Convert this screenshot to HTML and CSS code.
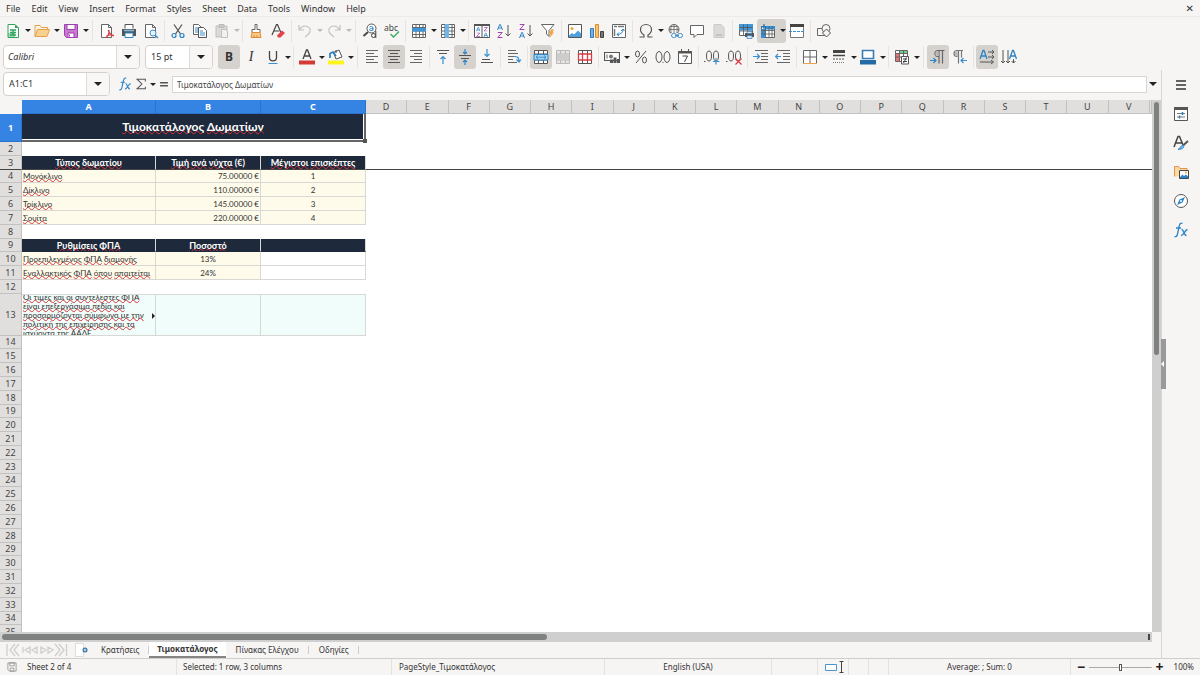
FILE: index.html
```html
<!DOCTYPE html>
<html lang="el">
<head>
<meta charset="utf-8">
<title>Τιμοκατάλογος</title>
<link rel="stylesheet" href="styles.css">
</head>
<body>
<svg class="defs" aria-hidden="true">
  <symbol id="i-new" viewBox="0 0 16 16"><path d="M3 1.500h7l3.500 3.500v9.500H3z" fill="#fff" stroke="#2fa45a"/><path d="M10 1.500v3.500h3.500z" fill="#2fa45a"/><path d="M5 7h6M5 9.500h6M5 12h6M8 7v5" stroke="#2fa45a" stroke-width="1.300"/><path d="M3 10h7v4H3z" fill="#2fa45a" opacity=".45"/></symbol>
  <symbol id="i-open" viewBox="0 0 16 16"><path d="M1 13.500V2.500h5l1.500 2h6V7" fill="#fdf3e0" stroke="#e3a04a"/><path d="M1 13.500L3.500 6.500h12l-2.500 7z" fill="#f9d090" stroke="#e3a04a"/></symbol>
  <symbol id="i-save" viewBox="0 0 16 16"><path d="M1.500 1.500h13v13h-11l-2-2z" fill="#c77bd0" stroke="#a03fae"/><path d="M4 1.500h8v5H4zM5 10h6v4.500H5z" fill="#fff" stroke="#a03fae"/><path d="M6.500 11.500v2" stroke="#a03fae"/></symbol>
  <symbol id="i-pdf" viewBox="0 0 16 16"><path d="M2.500 1.500h7l3 3v10h-10z" fill="#fff" stroke="#666"/><path d="M9.500 1.500v3h3" fill="none" stroke="#666"/><path d="M9 7c1.500 3 3 5.500 5.500 6M7 14.500c2.500-2 3.500-4 3-7.500M7.500 13c2-1 5-1.500 7.500-.5" fill="none" stroke="#dc3b45" stroke-width="1.200"/></symbol>
  <symbol id="i-print" viewBox="0 0 16 16"><path d="M4 5.500v-4h8v4" fill="#fff" stroke="#555"/><path d="M1 6h14v7H1z" fill="#555"/><path d="M3 7.500h10" stroke="#7cc0ef" stroke-width="1.500"/><path d="M4 10h8v4.500H4z" fill="#fff" stroke="#2a84c5"/></symbol>
  <symbol id="i-preview" viewBox="0 0 16 16"><path d="M2.500 1.500h7l3 3v10h-10z" fill="#fff" stroke="#666"/><path d="M9.500 1.500v3h3" fill="none" stroke="#666"/><circle cx="10" cy="10" r="3" fill="#e8f4fd" stroke="#3a8fd0"/><path d="M12 12l3 3" stroke="#3a8fd0" stroke-width="1.500"/></symbol>
  <symbol id="i-cut" viewBox="0 0 16 16"><path d="M4 1.500l6.500 9.500M12 1.500L5.500 11" stroke="#555" stroke-width="1.300"/><circle cx="4" cy="12.500" r="2" fill="none" stroke="#2a84c5" stroke-width="1.200"/><circle cx="12" cy="12.500" r="2" fill="none" stroke="#2a84c5" stroke-width="1.200"/></symbol>
  <symbol id="i-copy" viewBox="0 0 16 16"><path d="M1.500 1.500h5l2.500 2.500v7.500H1.500z" fill="#fff" stroke="#666"/><path d="M3 5h4M3 7h3M3 9h3" stroke="#3a8fd0"/><path d="M6.500 4.500h5l3 3v7h-8z" fill="#fff" stroke="#555"/><path d="M8 8h3M8 10h5M8 12h5" stroke="#3a8fd0"/></symbol>
  <symbol id="i-paste" viewBox="0 0 16 16"><path d="M2 3h11v11H2z" fill="#dcdad8" stroke="#c1bfbd"/><path d="M5 1.500h5v3H5z" fill="#cbc9c7" stroke="#bbb"/><path d="M7.500 6.500h4l2 2v6h-6z" fill="#f2f1f0" stroke="#c1bfbd"/></symbol>
  <symbol id="i-brush" viewBox="0 0 16 16"><path d="M7 1.500h2v5h3v3H4v-3h3z" fill="#fff" stroke="#666"/><path d="M4 9.500h8l1 5H3z" fill="#f8c98d" stroke="#df8c2f"/><path d="M6 12v2M9 12v2" stroke="#df8c2f"/></symbol>
  <symbol id="i-clear" viewBox="0 0 16 16"><path d="M2 12L6.500 1.500h1L11 10M4 8h5" fill="none" stroke="#444" stroke-width="1.200"/><path d="M7 12.500l5-5 3 2.500-4.500 4.500H8z" fill="#e4414b"/></symbol>
  <symbol id="i-undo" viewBox="0 0 16 16"><path d="M2 2v5h5M2.500 6.500C5 3 8 2.500 10.500 3.500 14 5 14 9 11 11.500L8 14" fill="none" stroke="#c4c2c0" stroke-width="1.200"/></symbol>
  <symbol id="i-redo" viewBox="0 0 16 16"><path d="M14 2v5H9M13.500 6.500C11 3 8 2.500 5.500 3.500 2 5 2 9 5 11.500L8 14" fill="none" stroke="#c4c2c0" stroke-width="1.200"/></symbol>
  <symbol id="i-find" viewBox="0 0 16 16"><circle cx="9.500" cy="5.500" r="4.500" fill="#fff" stroke="#555"/><path d="M6 9L1.500 13" stroke="#444" stroke-width="1.800"/><path d="M7.500 4c1.500-1 3.500-.5 3.500 1v2.500M11 5.500c-2 0-3.500.3-3.500 1.300 0 1.200 2.500 1.200 3.500-.3" fill="none" stroke="#2a84c5"/><circle cx="11.500" cy="12.500" r="2" fill="#f6f5f4" stroke="#444"/><path d="M13.800 8v7" stroke="#444"/></symbol>
  <symbol id="i-spell" viewBox="0 0 16 16"><text x="0" y="7.500" font-size="8.500" fill="#444">abc</text><path d="M6.500 11l3 3L15 8.500" fill="none" stroke="#35a860" stroke-width="1.300"/></symbol>
  <symbol id="i-row" viewBox="0 0 16 16"><path d="M1.500 1.500h13v13h-13zM1.500 4.500h13M1.500 8h13M1.500 11.500h13M5 1.500v13M8.500 1.500v13M12 1.500v13" fill="#fff" stroke="#666"/><path d="M1 5h14v3.500H1z" fill="#3f96d8"/></symbol>
  <symbol id="i-col" viewBox="0 0 16 16"><path d="M1.500 1.500h13v13h-13zM1.500 4.500h13M1.500 8h13M1.500 11.500h13M5 1.500v13M8.500 1.500v13M12 1.500v13" fill="#fff" stroke="#666"/><path d="M5 1h4v14H5z" fill="#6db5ea"/></symbol>
  <symbol id="i-a" viewBox="0 0 6 6"><path d="M.5 6L2.700.5h.6L5.500 6M1.300 4h3.400" fill="none" stroke="#2a84c5"/></symbol>
  <symbol id="i-z" viewBox="0 0 6 6"><path d="M.8.500h4.400L.8 5.500h4.600" fill="none" stroke="#a33fae"/></symbol>
  <symbol id="i-sort" viewBox="0 0 16 16"><path d="M.5 1.500h15v13H.5zM8 1.500v13" fill="#fff" stroke="#555"/><path d="M0 2h16" stroke="#555" stroke-width="2"/><use href="#i-a" x="2" y="4" width="4.500" height="4.500"/><use href="#i-z" x="2" y="9.500" width="4.500" height="4.500"/><use href="#i-z" x="9.500" y="4" width="4.500" height="4.500"/><use href="#i-a" x="9.500" y="9.500" width="4.500" height="4.500"/></symbol>
  <symbol id="i-asc" viewBox="0 0 16 16"><use href="#i-a" x="1" y="1" width="6" height="6"/><use href="#i-z" x="1" y="9" width="6" height="6"/><path d="M12 2v11M9.500 10.500L12 13l2.500-2.500" fill="none" stroke="#555"/></symbol>
  <symbol id="i-desc" viewBox="0 0 16 16"><use href="#i-z" x="1" y="1" width="6" height="6"/><use href="#i-a" x="1" y="9" width="6" height="6"/><path d="M12 2v11M9.500 10.500L12 13l2.500-2.500" fill="none" stroke="#555"/></symbol>
  <symbol id="i-filter" viewBox="0 0 16 16"><path d="M1.500 1.500h12.500L9 7.500v6L6.500 11V7.500z" fill="#fff" stroke="#666"/><path d="M11 6.500h3L12.500 9.500H14L9.500 15l1-4H9z" fill="#f1a640"/></symbol>
  <symbol id="i-image" viewBox="0 0 16 16"><path d="M1.500 1.500h13v13h-13z" fill="#fff" stroke="#555"/><circle cx="5" cy="5.500" r="1.500" fill="#f2a33c"/><path d="M2 12.500L5 10l2 1.500L11 7.500l3 3V14H2z" fill="#4e9fdc"/></symbol>
  <symbol id="i-chart" viewBox="0 0 16 16"><path d="M1.500 5.500h3v9h-3z" fill="#6db5ea" stroke="#2a7fc0"/><path d="M6.500 1.500h3v13h-3z" fill="#f8c273" stroke="#df8c2f"/><path d="M11.500 8.500h3v6h-3z" fill="#777" stroke="#444"/></symbol>
  <symbol id="i-pivot" viewBox="0 0 16 16"><path d="M1.500 1.500h13v13h-13z" fill="#fff" stroke="#666"/><path d="M3 3.500h3M7 3.500h6M3.500 6v7" stroke="#777" stroke-width="1.500"/><path d="M6 11.500c4 0 6-2 6-5M10 8l2-2 1.500 2M8 9.500l-2 2L8 13" fill="none" stroke="#2a84c5"/></symbol>
  <symbol id="i-omega" viewBox="0 0 16 16"><path d="M1.500 14h4.500v-2C3.500 10.500 2.500 9 2.500 6.500 2.500 3.500 5 1.500 8 1.500s5.500 2 5.500 5c0 2.500-1 4-3.500 5.500v2h4.500" fill="none" stroke="#555" stroke-width="1.200"/></symbol>
  <symbol id="i-link" viewBox="0 0 16 16"><circle cx="7" cy="6.500" r="5" fill="none" stroke="#666"/><path d="M2 6.500h10M7 1.500v10M3 3.500h8M4.500 2.500c-1 3-1 5 0 8M9.500 2.500c1 3 1 5 0 8" fill="none" stroke="#666" stroke-width=".8"/><path d="M4 10h12v5H4z" fill="#f6f5f4"/><rect x="4.500" y="10.500" width="5" height="4" rx="2" fill="none" stroke="#3a8fd0"/><rect x="10.500" y="10.500" width="5" height="4" rx="2" fill="none" stroke="#3a8fd0"/><path d="M8 12.500h4" stroke="#3a8fd0"/></symbol>
  <symbol id="i-comment" viewBox="0 0 16 16"><path d="M1.500 2.500h13v9H8L5 14.500v-3H1.500z" fill="#fff" stroke="#666"/></symbol>
  <symbol id="i-header" viewBox="0 0 16 16"><path d="M3 1.500h7l3 3v10H3z" fill="#dcdad8" stroke="#cbc9c7"/><path d="M5 11h6v2H5z" fill="#c4c2c0"/></symbol>
  <symbol id="i-range" viewBox="0 0 16 16"><path d="M1.500 1.500h13v11h-13z" fill="#fff" stroke="#666"/><path d="M1 1h14v6.500H1z" fill="#3f96d8"/><path d="M1.500 4.500h13M1.500 8h13M5.500 1.500v11M9.500 1.500v11" stroke="#555" stroke-width=".8"/><path d="M7 10h9v4H7z" fill="#555"/><path d="M9 8.500h5v2H9zM9 12.500h5v3H9z" fill="#cfe6f8" stroke="#2a6fa8" stroke-width=".6"/></symbol>
  <symbol id="i-freeze" viewBox="0 0 16 16"><path d="M1.500 3.500h13v11h-13z" fill="#fff" stroke="#666"/><path d="M1 6h4.500v9H1zM5 3h10v3.500H5z" fill="#3490d6"/><path d="M1.500 7.500h13M1.500 11h13M5.500 3.500v11M9 3.500v11M12 3.500v11" stroke="#555" stroke-width=".8"/><path d="M1 4h5M4 1v5" stroke="#1c6fb2" stroke-width="1.200"/></symbol>
  <symbol id="i-split" viewBox="0 0 16 16"><path d="M1.500 1.500h13v13h-13z" fill="#fff" stroke="#777"/><path d="M1 2.500h14" stroke="#444" stroke-width="3"/><path d="M0 8.500h16" stroke="#3a8fd0" stroke-dasharray="3 1"/></symbol>
  <symbol id="i-shapes" viewBox="0 0 16 16"><path d="M1.500 5.500h7v7h-7z" fill="none" stroke="#666"/><circle cx="10" cy="5.500" r="4" fill="#f6f5f4" stroke="#666"/><path d="M10.500 6l4 4-4 4-4-4z" fill="#f6f5f4" stroke="#555"/></symbol>
  <symbol id="i-under" viewBox="0 0 16 16"><path d="M4.500 2v6.500c0 4.500 7 4.500 7 0V2" fill="none" stroke="#444" stroke-width="1.300"/><path d="M3.500 14.500h9" stroke="#3a8fd0"/></symbol>
  <symbol id="i-fcolor" viewBox="0 0 16 16"><path d="M4 10L7.500 1h1L12 10M5.500 7h5" fill="none" stroke="#444" stroke-width="1.300"/><path d="M0 11.500h16v4H0z" fill="#d63a36"/></symbol>
  <symbol id="i-bcolor" viewBox="0 0 16 16"><path d="M5.500 3.500L11 1l3 7-6 2z" fill="#fff" stroke="#555"/><path d="M2 9V4.500l3-1.500L8 7" fill="none" stroke="#2a7fc0" stroke-width="1.700"/><path d="M8 1v3" stroke="#444"/><path d="M0 11.500h16v4H0z" fill="#fcf41c"/></symbol>
  <symbol id="i-left" viewBox="0 0 16 16"><path d="M2 1.500h12M2 4.500h8M2 7.500h12M2 10.500h8M2 13.500h12" stroke="#666"/></symbol>
  <symbol id="i-center" viewBox="0 0 16 16"><path d="M2 1.500h12M4 4.500h8M2 7.500h12M4 10.500h8M2 13.500h12" stroke="#555"/></symbol>
  <symbol id="i-right" viewBox="0 0 16 16"><path d="M2 1.500h12M6 4.500h8M2 7.500h12M6 10.500h8M2 13.500h12" stroke="#666"/></symbol>
  <symbol id="i-top" viewBox="0 0 16 16"><path d="M2 1.500h12M4 4.500h8" stroke="#555"/><path d="M8 15V7.500M5.500 10L8 7.500l2.500 2.500" fill="none" stroke="#3a8fd0" stroke-width="1.200"/></symbol>
  <symbol id="i-middle" viewBox="0 0 16 16"><path d="M2 6.500h12M4 9.500h8" stroke="#555"/><path d="M8 0v5M6 3l2 2 2-2M8 16v-5M6 13l2-2 2 2" fill="none" stroke="#2a84c5" stroke-width="1.200"/></symbol>
  <symbol id="i-bottom" viewBox="0 0 16 16"><path d="M3 10.500h8M2 13.500h12" stroke="#555"/><path d="M8 0v7.500M5.500 5L8 7.500 10.500 5" fill="none" stroke="#3a8fd0" stroke-width="1.200"/></symbol>
  <symbol id="i-wrap" viewBox="0 0 16 16"><path d="M2 1.500h8M2 4.500h10M2 7.500h6M2 10.500h5M2 13.500h9" stroke="#666"/><path d="M8 7.500c4 0 5 1 5 5M10.500 10.500L13 13l2-2.500" fill="none" stroke="#3a8fd0" stroke-width="1.200"/></symbol>
  <symbol id="i-merge" viewBox="0 0 16 16"><path d="M1.500 1.500h13v13h-13zM1.500 5h13M1.500 11h13M5.500 1.500V5M10.500 1.500V5M5.500 11v3.500M10.500 11v3.500" fill="#fff" stroke="#555"/><path d="M1 5.500h14v5.500H1z" fill="#a9d3f3" stroke="#2a84c5"/><path d="M3 8.200h10M5 6.500L3 8.200 5 10M11 6.500l2 1.700-2 1.800" fill="none" stroke="#2a84c5" stroke-width=".8"/></symbol>
  <symbol id="i-mergeoff" viewBox="0 0 16 16"><path d="M1.500 1.500h13v13h-13zM1.500 5h13M1.500 11h13M5.500 1.500V5M10.500 1.500V5M5.500 11v3.500M10.500 11v3.500" fill="#e8e6e4" stroke="#bbb9b7"/><path d="M2 5.500h12v5H2z" fill="#cfcdcb"/></symbol>
  <symbol id="i-unmerge" viewBox="0 0 16 16"><path d="M1.500 1.500h13v13h-13zM5.500 1.500v13M10.500 1.500v13" fill="#fff" stroke="#555"/><path d="M1 5h14M1 11h14M5.500 5v6M10.500 5v6M1.500 5v6M14.500 5v6" stroke="#dc3b45" stroke-width="1.300"/></symbol>
  <symbol id="i-money" viewBox="0 0 16 16"><path d="M.5 3.500h15v8H.5z" fill="#fff" stroke="#555" stroke-width="1.200"/><circle cx="7" cy="7.500" r="2" fill="#777"/><path d="M6 10.500h3v3.500H6zM9.500 8.500h3V14h-3zM13 10h3v4h-3z" fill="#555"/><path d="M3 5.500v4" stroke="#666"/></symbol>
  <symbol id="i-percent" viewBox="0 0 16 16"><path d="M13 2L3 14" stroke="#555"/><ellipse cx="4.500" cy="5" rx="2" ry="3" fill="none" stroke="#555"/><ellipse cx="11.500" cy="11" rx="2" ry="3" fill="none" stroke="#555"/></symbol>
  <symbol id="i-number" viewBox="0 0 16 16"><ellipse cx="4" cy="8" rx="3" ry="5.500" fill="none" stroke="#555"/><ellipse cx="12" cy="8" rx="3" ry="5.500" fill="none" stroke="#555"/><path d="M7.500 13.500h1" stroke="#555"/></symbol>
  <symbol id="i-date" viewBox="0 0 16 16"><path d="M1.500 2.500h13v12h-13z" fill="#fff" stroke="#555"/><path d="M1 3.500h14" stroke="#555" stroke-width="2"/><path d="M4.500 0v3M11.500 0v3" stroke="#555"/><path d="M5.500 7h5L7.500 13" fill="none" stroke="#444"/></symbol>
  <symbol id="i-decadd" viewBox="0 0 16 16"><ellipse cx="5" cy="7" rx="2.500" ry="5" fill="none" stroke="#555"/><ellipse cx="12" cy="7" rx="2.500" ry="5" fill="none" stroke="#555"/><path d="M0 12.500h1.500" stroke="#555"/><path d="M12 9v6.500M9 12.500h6.500" stroke="#3a8fd0" stroke-width="1.200"/></symbol>
  <symbol id="i-decdel" viewBox="0 0 16 16"><ellipse cx="5" cy="7" rx="2.500" ry="5" fill="none" stroke="#555"/><ellipse cx="12" cy="7" rx="2.500" ry="5" fill="none" stroke="#555"/><path d="M0 12.500h1.500" stroke="#555"/><path d="M9.500 9.500l6 6M15.500 9.500l-6 6" stroke="#dc3b45" stroke-width="1.200"/></symbol>
  <symbol id="i-indent" viewBox="0 0 16 16"><path d="M2 1.500h13M8 4.500h7M8 7.500h7M8 10.500h7M2 13.500h13" stroke="#666"/><path d="M0 7.500h6M4 5l2.500 2.500L4 10" fill="none" stroke="#3a8fd0" stroke-width="1.200"/></symbol>
  <symbol id="i-outdent" viewBox="0 0 16 16"><path d="M2 1.500h13M8 4.500h7M8 7.500h7M8 10.500h7M2 13.500h13" stroke="#666"/><path d="M0 7.500h6M3 5L.5 7.500 3 10" fill="none" stroke="#3a8fd0" stroke-width="1.200"/></symbol>
  <symbol id="i-borders" viewBox="0 0 16 16"><path d="M1.500 1.500h13v13h-13zM8 1.500v13M1.500 8h13" fill="#fff" stroke="#666"/><path d="M1 14.500h14" stroke="#eda34e"/></symbol>
  <symbol id="i-lines" viewBox="0 0 16 16"><path d="M2 2.500h12" stroke="#444" stroke-width="3"/><path d="M2 6.500h12" stroke="#444" stroke-width="1.500"/><path d="M2 10h12" stroke="#555" stroke-dasharray="2 1"/><path d="M2 13.500h12" stroke="#777" stroke-dasharray="1 1"/></symbol>
  <symbol id="i-lcolor" viewBox="0 0 16 16"><path d="M2.500 1.500h11v8h-11z" fill="#fff" stroke="#3a7db3" stroke-width="1.600"/><path d="M0 11h16v4.500H0z" fill="#256aa5"/></symbol>
  <symbol id="i-cond" viewBox="0 0 16 16"><path d="M1.500 1.500h12v11h-12z" fill="#fff" stroke="#666"/><path d="M5 2h8v2.500H5z" fill="#77cf8c"/><path d="M2 5h3.500v7H2z" fill="#e77474"/><path d="M1.500 4.500h12M1.500 8h12M5.500 1.500v11M9.500 1.500v11" stroke="#666"/><path d="M7.500 7.500h7v7.500h-7z" fill="#fff" stroke="#555"/><path d="M9 10h4M9 12.500h4M12.500 8.500l-3 5.500" stroke="#444"/></symbol>
  <symbol id="i-ltr" viewBox="0 0 16 16"><path d="M14.500 1.500H8c-4 0-4 6 0 6h.5M9 1.500v13M12.500 1.500v13" fill="none" stroke="#666" stroke-width="1.200"/><path d="M5.500 2.500h3v4.500h-3z" fill="#bbb"/><path d="M0 11.500h5.500M3.500 9L6 11.500 3.500 14" fill="none" stroke="#2a84c5" stroke-width="1.200"/></symbol>
  <symbol id="i-rtl" viewBox="0 0 16 16"><path d="M11 1.500H5c-4 0-4 6 0 6h.5M6.500 1.500v13M9.500 1.500v7" fill="none" stroke="#777" stroke-width="1.200"/><path d="M3 2.500h3v4.500H3z" fill="#bbb"/><path d="M9 11.500h6M11.500 9L9 11.500l2.500 2.500" fill="none" stroke="#3a8fd0" stroke-width="1.200"/></symbol>
  <symbol id="i-horiz" viewBox="0 0 16 16"><path d="M1 10L4 1.500h1L8 10M2.500 7h4" fill="none" stroke="#2a84c5" stroke-width="1.300"/><path d="M9 3h6M9 8h6M1 13h13M13 1l2 2-2 2M13 6l2 2-2 2M12 11l2.500 2-2.500 2" fill="none" stroke="#555"/></symbol>
  <symbol id="i-vert" viewBox="0 0 16 16"><path d="M8.500 10L11.500 1.500h1L15.500 10M10 7h4" fill="none" stroke="#2a84c5" stroke-width="1.300"/><path d="M2 1v13M7 1v13M12.500 10v4M0 12l2 2 2-2M5 12l2 2 2-2M10.500 12l2 2 2-2" fill="none" stroke="#555"/></symbol>
  <symbol id="i-fx" viewBox="0 0 16 16"><path d="M9.500 1.500C7.500.5 6.500 2 6 5L4.500 12c-.5 2.500-1.500 3-3 2.500M3 6h5" fill="none" stroke="#2a84c5" stroke-width="1.300"/><path d="M8.500 7.500c2.500-.5 2 6.500 5 6M14.500 7.500c-2.500 0-4 6.500-6.500 6" fill="none" stroke="#2a84c5" stroke-width="1.300"/></symbol>
  <symbol id="i-sum" viewBox="0 0 16 16"><path d="M13 5V2.500H3.500L9 8l-5.500 5.500H13V11" fill="none" stroke="#555" stroke-width="1.200"/></symbol>
  <symbol id="i-equal" viewBox="0 0 16 16"><path d="M3.500 6.500h9M3.500 10h9" stroke="#555" stroke-width="1.700"/></symbol>
  <symbol id="i-menu" viewBox="0 0 16 16"><path d="M3 4h10M3 8h10M3 12h10" stroke="#333" stroke-width="1.700"/></symbol>
  <symbol id="i-props" viewBox="0 0 16 16"><path d="M1.500 1.500h13v13h-13z" fill="#fff" stroke="#555"/><path d="M1 2.500h14" stroke="#555" stroke-width="3"/><path d="M4 7.500h8M4 11h8" stroke="#777"/><path d="M9.500 6v3M6.500 9.500v3" stroke="#2a84c5" stroke-width="1.500"/></symbol>
  <symbol id="i-styles" viewBox="0 0 16 16"><path d="M1 12L5 1.500h1.500L10 10M3 8h6" fill="none" stroke="#444" stroke-width="1.500"/><path d="M15 6l-5 4.500" stroke="#555" stroke-width="2"/><path d="M10 10c1.500 1 1.500 4-5 4.500C8 13 7 11 10 10z" fill="#7cc0ef" stroke="#2a84c5"/></symbol>
  <symbol id="i-gallery" viewBox="0 0 16 16"><path d="M1.500 12.500v-10h4l1.500 2h7v8" fill="#fbd9a5" stroke="#e3924a"/><path d="M6.500 6.500h9v8h-9z" fill="#fff" stroke="#444"/><circle cx="13" cy="8.500" r="1" fill="#f2a33c"/><path d="M7 13l2.500-2.500L11 12l2-1.500 2 2V14H7z" fill="#2a84c5"/></symbol>
  <symbol id="i-nav" viewBox="0 0 16 16"><circle cx="8" cy="8" r="6.500" fill="#fff" stroke="#555"/><path d="M12 4L9.500 9.500 4 12l2.500-5.500z" fill="#2a84c5"/><circle cx="8" cy="8" r="1" fill="#fff"/></symbol>
  <symbol id="i-tabs" viewBox="0 0 62 14"><path d="M1 1v12M9 1L4 7l5 6M13 1L8 7l5 6M17 4v6M24 4l-5 3 5 3zM31 4l-5 3 5 3zM35 4l5 3-5 3zM42 4l5 3-5 3zM49 1l5 6-5 6M53 1l5 6-5 6M60.500 1v12" fill="none" stroke="#d0cecc" stroke-width="1.300"/></symbol>
  <symbol id="i-addtab" viewBox="0 0 16 16"><path d="M1.500 1.500h8v13h-8z" fill="#fff" stroke="#ddd"/><circle cx="11" cy="8" r="2.500" fill="#2b6ca8"/><path d="M9.500 8h3M11 6.500v3" stroke="#fff" stroke-width=".8"/></symbol>
  <symbol id="i-doc" viewBox="0 0 16 16"><path d="M2.500 2.500h11v11h-9l-2-2zM5 2.500h6v4H5zM5.500 9.500h5v4h-5z" fill="none" stroke="#888"/></symbol>
  <symbol id="i-selmode" viewBox="0 0 22 14"><path d="M1.500 4.500h11v6h-11z" fill="#fff" stroke="#4b94c9"/><path d="M15.500 1.500h4M15.500 12.500h4M17.500 1.500v11" stroke="#444"/></symbol>
</svg>

<nav class="menubar" aria-label="Menu">
  <button>File</button><button>Edit</button><button>View</button><button>Insert</button><button>Format</button><button>Styles</button><button>Sheet</button><button>Data</button><button>Tools</button><button>Window</button><button>Help</button>
  <button class="menubar-close" aria-label="Close document">✕</button>
</nav>

<div class="toolbar" role="toolbar" aria-label="Standard">
  <button class="tool" aria-label="New"><svg><use href="#i-new"/></svg></button><button class="drop" aria-label="New options"></button>
  <button class="tool" aria-label="Open"><svg><use href="#i-open"/></svg></button><button class="drop" aria-label="Open options"></button>
  <button class="tool" aria-label="Save"><svg><use href="#i-save"/></svg></button><button class="drop" aria-label="Save options"></button>
  <span class="sep sep-wide"></span>
  <button class="tool" aria-label="Export as PDF"><svg><use href="#i-pdf"/></svg></button>
  <button class="tool" aria-label="Print"><svg><use href="#i-print"/></svg></button>
  <button class="tool" aria-label="Print preview"><svg><use href="#i-preview"/></svg></button>
  <span class="sep"></span>
  <button class="tool" aria-label="Cut"><svg><use href="#i-cut"/></svg></button>
  <button class="tool" aria-label="Copy"><svg><use href="#i-copy"/></svg></button>
  <button class="tool" aria-label="Paste"><svg><use href="#i-paste"/></svg></button><button class="drop" disabled aria-label="Paste options"></button>
  <span class="sep"></span>
  <button class="tool" aria-label="Clone formatting"><svg><use href="#i-brush"/></svg></button>
  <button class="tool" aria-label="Clear formatting"><svg><use href="#i-clear"/></svg></button>
  <span class="sep"></span>
  <button class="tool" aria-label="Undo"><svg><use href="#i-undo"/></svg></button><button class="drop" disabled aria-label="Undo list"></button>
  <button class="tool" aria-label="Redo"><svg><use href="#i-redo"/></svg></button><button class="drop" disabled aria-label="Redo list"></button>
  <span class="sep sep-wide"></span>
  <button class="tool" aria-label="Find and replace"><svg><use href="#i-find"/></svg></button>
  <button class="tool" aria-label="Spelling"><svg><use href="#i-spell"/></svg></button>
  <span class="sep"></span>
  <button class="tool" aria-label="Row"><svg><use href="#i-row"/></svg></button><button class="drop" aria-label="Row options"></button>
  <button class="tool" aria-label="Column"><svg><use href="#i-col"/></svg></button><button class="drop" aria-label="Column options"></button>
  <span class="sep"></span>
  <button class="tool" aria-label="Sort"><svg><use href="#i-sort"/></svg></button>
  <button class="tool" aria-label="Sort ascending"><svg><use href="#i-asc"/></svg></button>
  <button class="tool" aria-label="Sort descending"><svg><use href="#i-desc"/></svg></button>
  <button class="tool" aria-label="AutoFilter"><svg><use href="#i-filter"/></svg></button>
  <span class="sep"></span>
  <button class="tool" aria-label="Insert image"><svg><use href="#i-image"/></svg></button>
  <button class="tool" aria-label="Insert chart"><svg><use href="#i-chart"/></svg></button>
  <button class="tool" aria-label="Pivot table"><svg><use href="#i-pivot"/></svg></button>
  <span class="sep"></span>
  <button class="tool" aria-label="Special character"><svg><use href="#i-omega"/></svg></button><button class="drop" aria-label="Special character options"></button>
  <button class="tool" aria-label="Hyperlink"><svg><use href="#i-link"/></svg></button>
  <button class="tool" aria-label="Comment"><svg><use href="#i-comment"/></svg></button>
  <button class="tool" aria-label="Headers and footers"><svg><use href="#i-header"/></svg></button>
  <span class="sep"></span>
  <button class="tool" aria-label="Print area"><svg><use href="#i-range"/></svg></button>
  <span class="pressed-pair"><button class="tool" aria-label="Freeze rows and columns"><svg><use href="#i-freeze"/></svg></button><button class="drop" aria-label="Freeze options"></button></span>
  <button class="tool" aria-label="Split window"><svg><use href="#i-split"/></svg></button>
  <span class="sep"></span>
  <button class="tool" aria-label="Draw functions"><svg><use href="#i-shapes"/></svg></button>
</div>

<div class="toolbar toolbar-format" role="toolbar" aria-label="Formatting">
  <span class="combo combo-font"><input class="font-name" aria-label="Font name" value="Calibri"><button aria-label="Font list"></button></span>
  <span class="combo combo-size"><input aria-label="Font size" value="15 pt"><button aria-label="Size list"></button></span>
  <button class="tool pressed letter-bold" aria-label="Bold">B</button>
  <button class="tool letter-italic" aria-label="Italic">I</button>
  <button class="tool" aria-label="Underline"><svg><use href="#i-under"/></svg></button><button class="drop" aria-label="Underline options"></button>
  <span class="sep"></span>
  <button class="tool" aria-label="Font color"><svg><use href="#i-fcolor"/></svg></button><button class="drop" aria-label="Font color options"></button>
  <button class="tool" aria-label="Background color"><svg><use href="#i-bcolor"/></svg></button><button class="drop" aria-label="Background color options"></button>
  <span class="sep sep-wide"></span>
  <button class="tool" aria-label="Align left"><svg><use href="#i-left"/></svg></button>
  <button class="tool pressed" aria-label="Align center"><svg><use href="#i-center"/></svg></button>
  <button class="tool" aria-label="Align right"><svg><use href="#i-right"/></svg></button>
  <span class="sep"></span>
  <button class="tool" aria-label="Align top"><svg><use href="#i-top"/></svg></button>
  <button class="tool pressed" aria-label="Center vertically"><svg><use href="#i-middle"/></svg></button>
  <button class="tool" aria-label="Align bottom"><svg><use href="#i-bottom"/></svg></button>
  <span class="sep"></span>
  <button class="tool" aria-label="Wrap text"><svg><use href="#i-wrap"/></svg></button>
  <span class="sep"></span>
  <button class="tool pressed" aria-label="Merge and center"><svg><use href="#i-merge"/></svg></button>
  <button class="tool" aria-label="Merge cells"><svg><use href="#i-mergeoff"/></svg></button>
  <button class="tool" aria-label="Unmerge cells"><svg><use href="#i-unmerge"/></svg></button>
  <span class="sep"></span>
  <button class="tool" aria-label="Currency"><svg><use href="#i-money"/></svg></button><button class="drop" aria-label="Currency options"></button>
  <button class="tool" aria-label="Percent"><svg><use href="#i-percent"/></svg></button>
  <button class="tool" aria-label="Number"><svg><use href="#i-number"/></svg></button>
  <button class="tool" aria-label="Date"><svg><use href="#i-date"/></svg></button>
  <span class="sep"></span>
  <button class="tool" aria-label="Add decimal place"><svg><use href="#i-decadd"/></svg></button>
  <button class="tool" aria-label="Delete decimal place"><svg><use href="#i-decdel"/></svg></button>
  <span class="sep"></span>
  <button class="tool" aria-label="Increase indent"><svg><use href="#i-indent"/></svg></button>
  <button class="tool" aria-label="Decrease indent"><svg><use href="#i-outdent"/></svg></button>
  <span class="sep"></span>
  <button class="tool" aria-label="Borders"><svg><use href="#i-borders"/></svg></button><button class="drop" aria-label="Border options"></button>
  <button class="tool" aria-label="Border style"><svg><use href="#i-lines"/></svg></button><button class="drop" aria-label="Border style options"></button>
  <button class="tool" aria-label="Border color"><svg><use href="#i-lcolor"/></svg></button><button class="drop" aria-label="Border color options"></button>
  <span class="sep"></span>
  <button class="tool" aria-label="Conditional formatting"><svg><use href="#i-cond"/></svg></button><button class="drop" aria-label="Conditional options"></button>
  <span class="sep sep-wide"></span>
  <button class="tool pressed" aria-label="Left to right"><svg><use href="#i-ltr"/></svg></button>
  <button class="tool" aria-label="Right to left"><svg><use href="#i-rtl"/></svg></button>
  <span class="sep"></span>
  <button class="tool pressed" aria-label="Horizontal text"><svg><use href="#i-horiz"/></svg></button>
  <button class="tool" aria-label="Vertical text"><svg><use href="#i-vert"/></svg></button>
</div>

<div class="main">
  <div class="document">
    <div class="formula-bar">
      <span class="combo combo-name"><input aria-label="Name box" value="A1:C1"><button aria-label="Named ranges"></button></span>
      <button class="formula-tool" aria-label="Function wizard"><svg><use href="#i-fx"/></svg></button>
      <button class="formula-tool" aria-label="Sum"><svg><use href="#i-sum"/></svg></button><button class="drop" aria-label="Sum options"></button>
      <button class="formula-tool" aria-label="Formula"><svg><use href="#i-equal"/></svg></button>
      <input class="formula-input" aria-label="Input line" value="Τιμοκατάλογος Δωματίων">
      <button class="drop drop-large" aria-label="Expand formula bar"></button>
    </div>
    <div class="viewport">
      <div class="sheet">
        <table>
          <colgroup><col class="c-head"><col class="c-a"><col class="c-b"><col class="c-b"><col span="19"><col class="c-end"></colgroup>
          <thead><tr><td class="corner"></td><th class="sel">A</th><th class="sel">B</th><th class="sel">C</th><th>D</th><th>E</th><th>F</th><th>G</th><th>H</th><th>I</th><th>J</th><th>K</th><th>L</th><th>M</th><th>N</th><th>O</th><th>P</th><th>Q</th><th>R</th><th>S</th><th>T</th><th>U</th><th>V</th><th></th></tr></thead>
          <tbody>
            <tr class="row-title"><th class="sel">1</th><td colspan="3" class="title"><span class="typo">Τιμοκατάλογος</span> <span class="typo">Δωματίων</span><i class="handle"></i></td><td colspan="20"></td></tr>
            <tr><th>2</th><td colspan="23"></td></tr>
            <tr class="frozen"><th>3</th><td class="head"><span class="typo">Τύπος</span> <span class="typo">δωματίου</span></td><td class="head"><span class="typo">Τιμή</span> <span class="typo">ανά</span> <span class="typo">νύχτα</span> (€)</td><td class="head"><span class="typo">Μέγιστοι</span> <span class="typo">επισκέπτες</span></td><td colspan="20"></td></tr>
            <tr><th>4</th><td class="cream"><span class="typo">Μονόκλινο</span></td><td class="cream num">75.00000 €</td><td class="cream mid">1</td><td colspan="20"></td></tr>
            <tr><th>5</th><td class="cream"><span class="typo">Δίκλινο</span></td><td class="cream num">110.00000 €</td><td class="cream mid">2</td><td colspan="20"></td></tr>
            <tr><th>6</th><td class="cream"><span class="typo">Τρίκλινο</span></td><td class="cream num">145.00000 €</td><td class="cream mid">3</td><td colspan="20"></td></tr>
            <tr><th>7</th><td class="cream"><span class="typo">Σουίτα</span></td><td class="cream num">220.00000 €</td><td class="cream mid">4</td><td colspan="20"></td></tr>
            <tr><th>8</th><td colspan="23"></td></tr>
            <tr><th>9</th><td class="head"><span class="typo">Ρυθμίσεις</span> <span class="typo">ΦΠΑ</span></td><td class="head"><span class="typo">Ποσοστό</span></td><td class="head"></td><td colspan="20"></td></tr>
            <tr><th>10</th><td class="cream"><span class="typo">Προεπιλεγμένος</span> <span class="typo">ΦΠΑ</span> <span class="typo">διαμονής</span></td><td class="cream mid">13%</td><td class="plain"></td><td colspan="20"></td></tr>
            <tr><th>11</th><td class="cream"><span class="typo">Εναλλακτικός</span> <span class="typo">ΦΠΑ</span> <span class="typo">όπου</span> <span class="typo">απαιτείται</span></td><td class="cream mid">24%</td><td class="plain"></td><td colspan="20"></td></tr>
            <tr><th>12</th><td colspan="23"></td></tr>
            <tr class="row-note"><th>13</th><td class="mint note"><div class="note-text"><div class="typo">Οι τιμές και οι συντελεστές ΦΠΑ<br>είναι επεξεργάσιμα πεδία και<br>προσαρμόζονται σύμφωνα με την<br>πολιτική της επιχείρησης και τα<br>ισχύοντα της ΑΑΔΕ.</div></div></td><td class="mint"></td><td class="mint"></td><td colspan="20"></td></tr>
            <tr><th>14</th><td colspan="23"></td></tr>
            <tr><th>15</th><td colspan="23"></td></tr>
            <tr><th>16</th><td colspan="23"></td></tr>
            <tr><th>17</th><td colspan="23"></td></tr>
            <tr><th>18</th><td colspan="23"></td></tr>
            <tr><th>19</th><td colspan="23"></td></tr>
            <tr><th>20</th><td colspan="23"></td></tr>
            <tr><th>21</th><td colspan="23"></td></tr>
            <tr><th>22</th><td colspan="23"></td></tr>
            <tr><th>23</th><td colspan="23"></td></tr>
            <tr><th>24</th><td colspan="23"></td></tr>
            <tr><th>25</th><td colspan="23"></td></tr>
            <tr><th>26</th><td colspan="23"></td></tr>
            <tr><th>27</th><td colspan="23"></td></tr>
            <tr><th>28</th><td colspan="23"></td></tr>
            <tr><th>29</th><td colspan="23"></td></tr>
            <tr><th>30</th><td colspan="23"></td></tr>
            <tr><th>31</th><td colspan="23"></td></tr>
            <tr><th>32</th><td colspan="23"></td></tr>
            <tr><th>33</th><td colspan="23"></td></tr>
            <tr><th>34</th><td colspan="23"></td></tr>
            <tr><th>35</th><td colspan="23"></td></tr>
          </tbody>
        </table>
      </div>
      <div class="vscroll"><div class="vthumb"></div></div>
    </div>
    <div class="hscroll"><div class="hthumb"></div><div class="hgrip"></div></div>
    <div class="tabs">
      <button class="tab-nav" aria-label="Scroll tabs"><svg><use href="#i-tabs"/></svg></button>
      <button class="tab-add" aria-label="Add sheet"><svg><use href="#i-addtab"/></svg></button>
      <button class="tab">Κρατήσεις</button><button class="tab active">Τιμοκατάλογος</button><button class="tab">Πίνακας Ελέγχου</button><button class="tab">Οδηγίες</button>
    </div>
  </div>
  <aside class="sidebar">
    <div class="grip"></div>
    <button aria-label="Sidebar settings"><svg><use href="#i-menu"/></svg></button>
    <button aria-label="Properties"><svg><use href="#i-props"/></svg></button>
    <button aria-label="Styles"><svg><use href="#i-styles"/></svg></button>
    <button aria-label="Gallery"><svg><use href="#i-gallery"/></svg></button>
    <button aria-label="Navigator"><svg><use href="#i-nav"/></svg></button>
    <button aria-label="Functions"><svg><use href="#i-fx"/></svg></button>
  </aside>
</div>

<footer class="status">
  <div class="status-doc"><svg><use href="#i-doc"/></svg><span>Sheet 2 of 4</span></div>
  <div>Selected: 1 row, 3 columns</div>
  <div class="status-style">PageStyle_Τιμοκατάλογος</div>
  <div class="status-mid">English (USA)</div>
  <div></div>
  <div class="status-sel"><svg><use href="#i-selmode"/></svg></div>
  <div></div>
  <div></div>
  <div class="status-mid">Average: ; Sum: 0</div>
  <div class="status-zoom"><button aria-label="Zoom out">−</button><input type="range" min="0" max="100" value="50" aria-label="Zoom"><button aria-label="Zoom in">+</button><span>100%</span></div>
</footer>
</body>
</html>
```

FILE: styles.css
```css
* { box-sizing: border-box; }

body {
  margin: 0;
  height: 100vh;
  display: flex;
  flex-direction: column;
  overflow: hidden;
  background: #f6f5f4;
  color: #333;
  font: 9px/12px "Noto Sans", "Open Sans", sans-serif;
}

button, input {
  font: inherit;
  color: inherit;
  border: 0;
  padding: 0;
  margin: 0;
  background: none;
}

svg { display: block; width: 16px; height: 16px; }
.defs { display: none; }

/* Menu bar */
.menubar {
  display: flex;
  align-items: center;
  height: 17px;
  flex: none;
  padding: 1px 0 0 1px;
  border-bottom: 1px solid #eceae8;
}
.menubar button { padding: 0 6px 0 5px; }
.menubar .menubar-close { margin-left: auto; font: 700 10px/12px "DejaVu Sans", sans-serif; }

/* Toolbars */
.toolbar {
  display: flex;
  align-items: center;
  flex: none;
  height: 27px;
  padding-left: 2px;
}
.toolbar-format { height: 26px; padding: 0 3px; }
.tool {
  flex: none;
  width: 22px;
  height: 24px;
  display: flex;
  align-items: center;
  justify-content: center;
  border-radius: 3px;
}
.letter-bold { font-size: 12px; font-weight: 700; }
.letter-italic { font: italic 14px/16px "Liberation Serif", serif; }
.pressed, .pressed-pair { background: #d5d1cd; }
.pressed-pair { display: flex; border-radius: 3px; }
.drop {
  flex: none;
  width: 7px;
  height: 24px;
  display: flex;
  align-items: center;
  justify-content: center;
}
.drop::after, .combo button::after {
  content: "";
  border: 3px solid transparent;
  border-top-color: #222;
  border-bottom: 0;
}
.drop:disabled::after { border-top-color: #bbb; }
.drop-large::after, .combo button::after { border-width: 4px 4px 0; }
.drop-large { width: 11px; }
.sep { flex: none; width: 1px; height: 22px; margin: 0 2px; background: #e6e4e2; }
.sep-wide { margin: 0 3px; }

.combo {
  display: flex;
  flex: none;
  height: 24px;
  border: 1px solid #d5d0cc;
  border-radius: 4px;
  background: #fff;
  overflow: hidden;
}
.combo input { flex: 1; min-width: 0; padding: 0 5px; }
.combo button {
  width: 23px;
  display: flex;
  align-items: center;
  justify-content: center;
  border-left: 1px solid #dedbd8;
  background: #f8f7f6;
}
.combo-font { width: 137px; margin-right: 5px; }
.combo .font-name { font-style: italic; padding: 0 4px; }
.combo-size { width: 68px; margin-right: 5px; }
.combo-name { width: 107px; margin-right: 7px; }

/* Document and sidebar */
.main { flex: 1; min-height: 0; display: flex; }
.document { flex: 1; min-width: 0; display: flex; flex-direction: column; }
.formula-bar {
  flex: none;
  display: flex;
  align-items: center;
  height: 30px;
  padding: 0 3px 2px;
}
.formula-tool { width: 16px; height: 16px; padding: 0 1px; }
.formula-bar svg { width: 14px; height: 14px; }
.formula-input {
  flex: 1;
  height: 17px;
  padding: 0 4px;
  border: 1px solid #d8d6d4;
  background: #fff;
  color: #444;
  font-size: 8px;
}

.viewport { flex: 1; min-height: 0; display: flex; }
.sheet { flex: 1; min-width: 0; overflow: hidden; background: #fff; }
.vscroll { flex: none; width: 9px; padding: 2px 2px; background: #cfcfcf; }
.vthumb { height: 48%; border-radius: 3px; background: #7f8180; }
.hscroll {
  flex: none;
  height: 10px;
  margin-right: 9px;
  padding: 2px 2px;
  display: flex;
  justify-content: space-between;
  background: #cfcfcf;
}
.hthumb { width: 47.5%; border-radius: 3px; background: #7f8180; }
.hgrip { width: 2px; background: #444; }

/* Spreadsheet grid */
table { width: 100%; table-layout: fixed; border-collapse: separate; border-spacing: 0; }
.c-head { width: 22px; }
.c-a { width: 134px; }
.c-b { width: 105px; }
.c-end { width: 2px; }
tr { height: 14px; }
tbody tr:nth-child(5n + 4) { height: 13px; }
tbody .row-title { height: 28px; }
tbody .row-note { height: 42px; }
td, th {
  padding: 0 1px;
  overflow: hidden;
  white-space: nowrap;
  line-height: 12px;
}
th {
  padding: 0;
  border: 1px solid #c4c2c0;
  border-width: 0 1px 1px 0;
  background: #e1dfde;
  color: #444;
  font-weight: 400;
}
th.sel { background: #3584e4; border-color: #2a72cc; color: #fff; font-weight: 700; }
.corner { background: #f6f5f4; }
tbody td { font-family: Lato, "Noto Sans", sans-serif; font-size: 8px; color: #333; }
tbody .head, tbody .title { background: #1e293b; color: #fff; font-weight: 700; text-align: center; }
tbody .head { font-size: 9px; line-height: 11px; }
.head, .cream, .plain, .mint { border: 1px solid #d8d8d4; border-width: 0 1px 1px 0; }
.head { border-bottom-color: #1e293b; }
.cream { background: #fffbeb; }
.mint { background: #f0fdfa; border-top-width: 1px; }
.num { text-align: right; }
.mid { text-align: center; }
.frozen > * { border-bottom: 1px solid #444; }
tbody .title {
  position: relative;
  overflow: visible;
  font-size: 12px;
  line-height: 20px;
  border-right: 2px solid #666;
  border-bottom: 2px solid #666;
  box-shadow: inset -1px -1px #fff;
}
.handle { position: absolute; right: -3px; bottom: -3px; width: 4px; height: 4px; background: #555; }
.typo {
  text-decoration: underline wavy #d8343a 1px;
  text-underline-offset: -1px;
  text-decoration-skip-ink: none;
}
.note { position: relative; }
.note-text { display: flex; align-items: center; height: 40px; overflow: hidden; line-height: 9px; }
.note::after {
  content: "";
  position: absolute;
  right: 0;
  top: 18px;
  border: 3px solid transparent;
  border-left-color: #222;
  border-right: 0;
}

/* Sheet tabs */
.tabs { flex: none; display: flex; height: 16px; padding-left: 6px; font-size: 8px; }
.tab-nav { width: 62px; }
.tab-nav svg { width: 62px; height: 14px; }
.tab-add { width: 23px; padding-left: 6px; }
.tab { padding: 0 10px; position: relative; }
.tab:not(.active)::after {
  content: "";
  position: absolute;
  right: 0;
  top: 4px;
  height: 8px;
  border-right: 1px solid #cfcdcb;
}
.active { padding: 0 8px; background: #fff; font-weight: 700; border-bottom: 2px solid #858583; }

/* Sidebar */
.sidebar {
  position: relative;
  flex: none;
  width: 39px;
  display: flex;
  flex-direction: column;
  align-items: center;
  gap: 13px;
  padding-top: 7px;
  border-left: 1px solid #d8d6d4;
}
.grip { position: absolute; left: -1px; top: 269px; width: 5px; height: 50px; background: #999; }
.grip::after {
  content: "";
  position: absolute;
  top: 22px;
  left: 0;
  border: 3px solid transparent;
  border-right-color: #fff;
  border-left: 0;
}

/* Status bar */
.status {
  flex: none;
  display: grid;
  grid-template-columns: 177fr 215fr 213fr 167fr 46fr 31fr 20fr 20fr 182fr 129fr;
  height: 17px;
  border-top: 1px solid #d0cecc;
  font-size: 8px;
}
.status > div {
  display: flex;
  align-items: center;
  padding: 0 6px;
  border-right: 1px solid #e4e2e0;
  white-space: nowrap;
  min-width: 0;
}
.status > div:last-child { border-right: 0; }
.status svg { flex: none; width: 12px; height: 12px; }
.status .status-doc { gap: 9px; }
.status .status-style { padding-left: 7px; }
.status .status-mid { justify-content: center; }
.status-sel svg { width: 22px; height: 14px; }
.status .status-zoom { gap: 4px; }
.status-zoom button { font-size: 14px; font-weight: 700; color: #222; }
.status-zoom span { margin-left: 6px; }
input[type="range"] {
  appearance: none;
  flex: 1;
  min-width: 0;
  height: 8px;
  background: linear-gradient(#aaa, #aaa) center / 100% 1px no-repeat;
}
input[type="range"]::-webkit-slider-thumb {
  appearance: none;
  width: 3px;
  height: 7px;
  border: 1px solid #555;
  background: #fff;
}
```
